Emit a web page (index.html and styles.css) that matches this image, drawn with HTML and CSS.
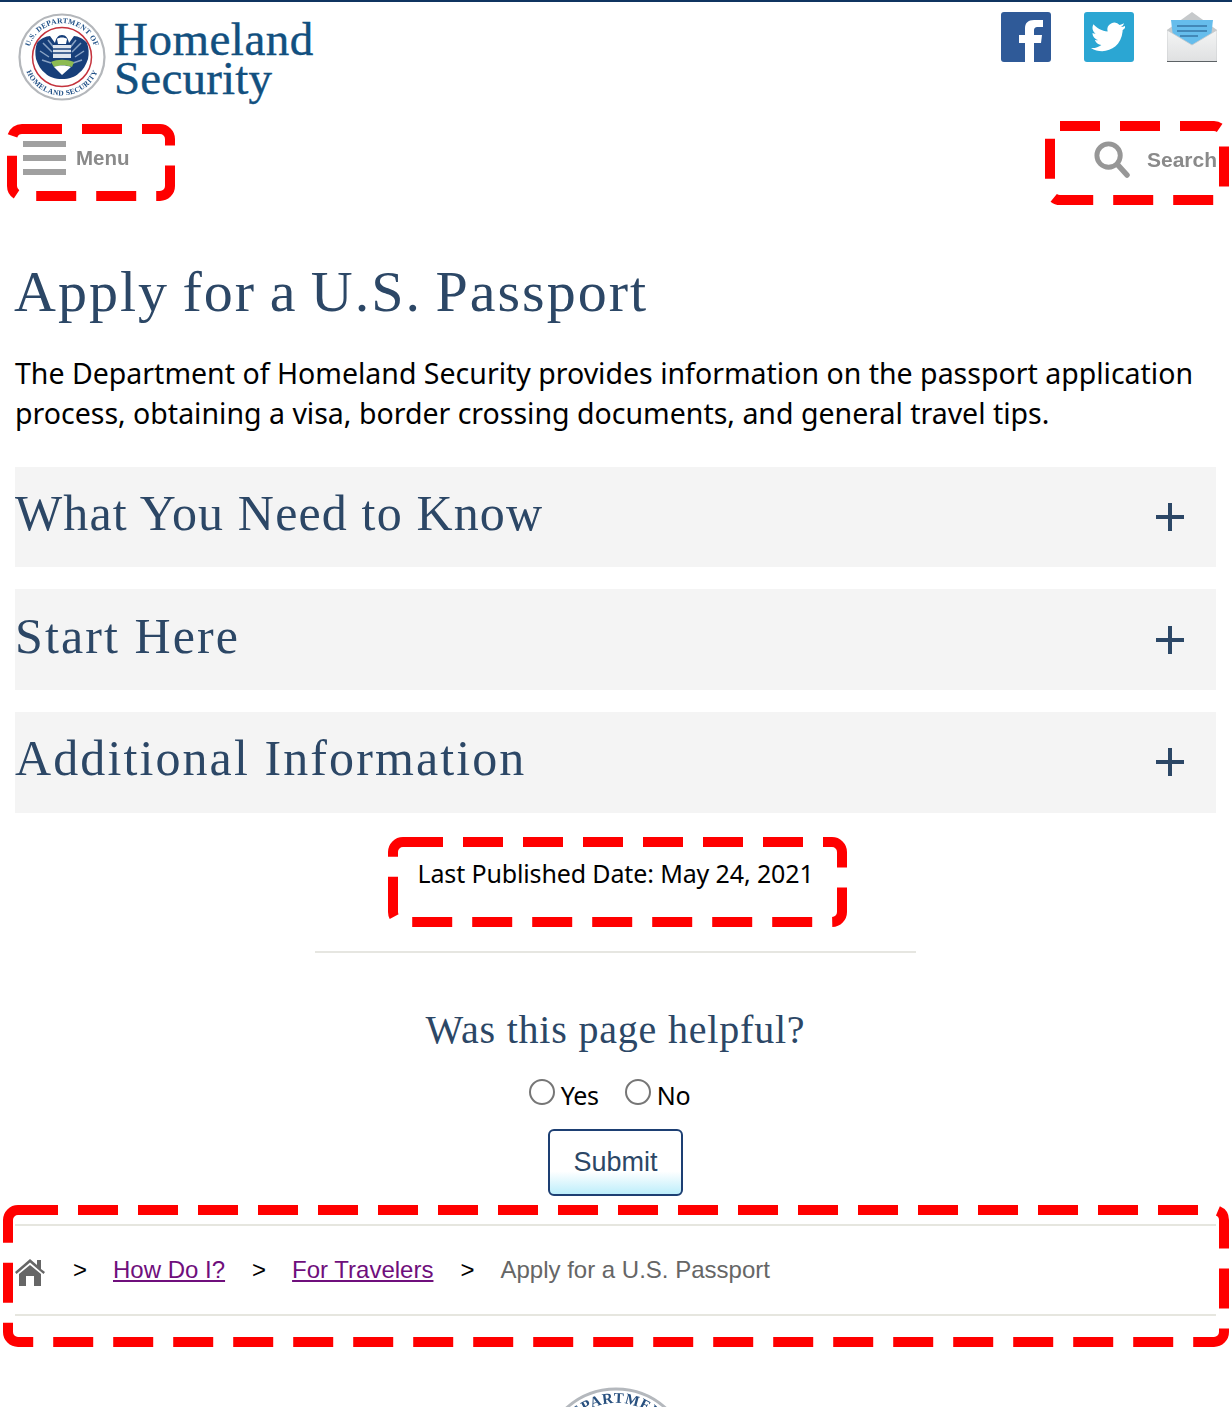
FILE: index.html
```html
<!DOCTYPE html>
<html lang="en">
<head>
<meta charset="utf-8">
<title>Apply for a U.S. Passport</title>
<link rel="stylesheet" href="styles.css">
</head>
<body>
<div class="page">
  <header class="masthead">
    <a class="brand" href="#">
      <svg class="seal" viewBox="0 0 88 88" aria-hidden="true">
        <circle cx="44" cy="44" r="42.5" fill="#fff" stroke="#b4b7bb" stroke-width="2.200"/>
        <path id="sealTop" d="M10.500 50a34 34 0 1 1 67 0" fill="none"/>
        <path id="sealBottom" d="M5.500 44a38.500 38.500 0 0 0 77 0" fill="none"/>
        <text class="seal-text"><textPath href="#sealTop" startOffset="50%" text-anchor="middle">U.S. DEPARTMENT OF</textPath></text>
        <text class="seal-text"><textPath href="#sealBottom" startOffset="50%" text-anchor="middle">HOMELAND SECURITY</textPath></text>
        <circle cx="44" cy="44" r="29.500" fill="#fff" stroke="#c4323c" stroke-width="1.500"/>
        <path d="M19 30c3-4 9-7 13-7l5 7c1-5 3-8 7-8s6 3 7 8l5-7c4 0 10 3 13 7 2 5 2 11 1 16-2 6-5 11-9 14-4 4-10 6-17 6s-13-2-17-6c-4-3-7-8-9-14-1-5-1-11 1-16z" fill="#173f7a"/>
        <path d="M25 30l9 9M30 27l7 9M63 30l-9 9M58 27l-7 9M22 38l9 6M66 38l-9 6M24 47l9 3M64 47l-9 3" stroke="#8aa3c4" stroke-width="1.500"/>
        <path d="M39 26c2-2 8-2 10 0l-1 5h-8z" fill="#fff"/>
        <path d="M35 32h18v13H35z" fill="#dfe5ee"/>
        <path d="M35 36h18M35 40h18" stroke="#173f7a" stroke-width="1.300"/>
        <path d="M33 49c6-3 16-3 23 0l-2 5c-5-2-12-2-18 0z" fill="#8dbb52"/>
        <path d="M36 54c5-2 12-2 17 0l-9 8z" fill="#fff"/>
      </svg>
      <span class="wordmark"><span class="word-top">Homeland</span><span class="word-bottom">Security</span></span>
    </a>
    <nav class="social" aria-label="Social">
      <svg class="social-icon" viewBox="0 0 50 50" aria-label="Facebook">
        <rect width="50" height="50" rx="3" fill="#2f5a98"/>
        <path d="M24 50V31h-6v-8h6v-7c0-5 3-8 9-8h9v7h-5c-3 0-4 1-4 4v4h8l-1 8h-7v19z" fill="#fff"/>
      </svg>
      <svg class="social-icon" viewBox="0 0 50 50" aria-label="Twitter">
        <rect width="50" height="50" rx="3" fill="#2ba6d3"/>
        <path d="M41 14c-1.300.6-2.600 1-4 1.100 1.400-.9 2.500-2.200 3-3.800-1.400.8-2.800 1.400-4.400 1.700a7 7 0 0 0-12 6.400C18 19.100 13 16.500 9.500 12.300c-1.900 3.200-1 7.300 2.100 9.400-1.100 0-2.200-.3-3.100-.8 0 3.400 2.400 6.300 5.600 7-1 .3-2.100.3-3.200.1.900 2.800 3.500 4.800 6.500 4.900-3 2.300-6.700 3.400-10.400 3 11.500 7.400 29.800 2.200 31.600-16.300 0-.5 0-.9 0-1.400 1-.7 1.800-1.500 2.400-2.200z" fill="#fff"/>
      </svg>
      <svg class="social-icon" viewBox="0 0 50 50" aria-label="Email">
        <defs>
          <linearGradient id="envelope" x1="0" y1="0" x2="0" y2="1">
            <stop offset="0" stop-color="#f4f5f5"/>
            <stop offset="1" stop-color="#dfe0e1"/>
          </linearGradient>
        </defs>
        <path d="M0 18L25 0l25 18v30a2 2 0 0 1-2 2H2a2 2 0 0 1-2-2z" fill="#c6c9cb"/>
        <path d="M4 8h42l-2 17-19 9-19-9z" fill="#66bdec"/>
        <path d="M10 14h30M10 19h30M13 24h18" stroke="#4288b8" stroke-width="2.200"/>
        <path d="M0 18l25 15 25-15v30a2 2 0 0 1-2 2H2a2 2 0 0 1-2-2z" fill="url(#envelope)" stroke="#c6c9cb" stroke-width=".8"/>
        <path d="M0 49.500h50" stroke="#5d6265" stroke-width="1.200"/>
      </svg>
    </nav>
  </header>

  <div class="toolbar">
    <a class="tool tool-menu" href="#">
      <span class="burger"><i></i><i></i><i></i></span>
      <span>Menu</span>
    </a>
    <a class="tool tool-search" href="#">
      <svg class="lens" viewBox="0 0 38 38" aria-hidden="true">
        <circle cx="16" cy="15" r="12" fill="none" stroke="#979797" stroke-width="5"/>
        <path d="M25 24l10 11" stroke="#979797" stroke-width="5.500" stroke-linecap="round"/>
      </svg>
      <span>Search</span>
    </a>
  </div>

  <main class="content">
    <h1 class="title">Apply for a U.S. Passport</h1>
    <p class="intro">The Department of Homeland Security provides information on the passport application process, obtaining a visa, border crossing documents, and general travel tips.</p>

    <section class="accordion">
      <div class="panel"><h2>What You Need to Know</h2><span class="plus"></span></div>
      <div class="panel"><h2 class="wide">Start Here</h2><span class="plus"></span></div>
      <div class="panel"><h2 class="wide">Additional Information</h2><span class="plus"></span></div>
    </section>

    <p class="published">Last Published Date: May 24, 2021</p>
    <hr class="divider">

    <form class="feedback">
      <h3>Was this page helpful?</h3>
      <div class="choices">
        <label><input type="radio" name="helpful"><span>Yes</span></label>
        <label><input type="radio" name="helpful"><span>No</span></label>
      </div>
      <button type="button" class="submit">Submit</button>
    </form>

    <nav class="crumbs" aria-label="Breadcrumb">
      <svg class="home" viewBox="0 0 30 28" aria-hidden="true">
        <path d="M0 14L15 1l7 6V2h4v9l4 3-1.500 2L15 4.500 1.500 16z" fill="#666"/>
        <path d="M4 16L15 7l11 9v12h-7V18h-8v10H4z" fill="#666"/>
      </svg>
      <span class="sep">&gt;</span>
      <a href="#">How Do I?</a>
      <span class="sep">&gt;</span>
      <a href="#">For Travelers</a>
      <span class="sep">&gt;</span>
      <span class="current">Apply for a U.S. Passport</span>
    </nav>
  </main>

  <footer class="foot">
    <svg class="foot-seal" viewBox="0 0 150 20" aria-hidden="true">
      <circle cx="75" cy="76" r="74" fill="#fff" stroke="#b4b8bd" stroke-width="3"/>
      <path id="arc" d="M15 76a60 60 0 0 1 120 0" fill="none"/>
      <text class="foot-seal-text"><textPath href="#arc" startOffset="50%" text-anchor="middle">DEPARTMENT</textPath></text>
    </svg>
  </footer>

  <svg class="marks" viewBox="0 0 1232 1408" aria-hidden="true">
    <rect x="12" y="129" width="158" height="67" rx="10"/>
    <rect x="1050" y="126" width="174" height="74" rx="10"/>
    <rect x="393" y="842" width="449" height="80" rx="10"/>
    <rect x="8" y="1210" width="1216" height="132" rx="10"/>
  </svg>
</div>
</body>
</html>
```
FILE: styles.css
```css
* { box-sizing: border-box; }
html, body { margin: 0; padding: 0; background: #fff; }
.page {
  position: relative;
  width: 1232px;
  height: 1408px;
  overflow: hidden;
  border-top: 2px solid #0f3460;
  font-family: "Noto Sans", sans-serif;
  color: #000;
}
.masthead {
  display: flex;
  justify-content: space-between;
  height: 106px;
  padding: 10px 15px 0 18px;
}
.brand {
  display: flex;
  gap: 9px;
  color: #12507f;
  text-decoration: none;
}
.seal { width: 88px; height: 88px; margin-top: 1px; filter: blur(0.35px); }
.seal-text { font: bold 7.500px "Liberation Serif", serif; fill: #1f4f86; letter-spacing: .3px; }
.wordmark {
  display: flex;
  flex-direction: column;
  padding-top: 8px;
  margin-left: -1px;
  font-family: "Liberation Serif", serif;
  font-size: 47px;
  line-height: 38.500px;
  -webkit-text-stroke: 0.4px #12507f;
}
.word-top { letter-spacing: 0.5px; }
.word-bottom { letter-spacing: 0.2px; }
.social { display: flex; gap: 33px; }
.social-icon { width: 50px; height: 50px; filter: blur(0.35px); }

.toolbar {
  display: flex;
  justify-content: space-between;
  height: 152px;
  padding: 0 15px 0 23px;
}
.tool {
  display: flex;
  align-items: center;
  align-self: flex-start;
  color: #8a8a8a;
  text-decoration: none;
  filter: blur(0.5px);
  font-family: "Liberation Sans", sans-serif;
  font-weight: bold;
}
.tool-menu { gap: 10px; margin-top: 33px; font-size: 20.500px; }
.tool-search { gap: 17px; margin-top: 33px; font-size: 21px; }
.burger { display: flex; flex-direction: column; gap: 8px; width: 43px; }
.burger i { height: 6px; background: #a0a0a0; }
.lens { width: 37px; height: 37px; }

.content { padding: 0 16px 0 15px; }
.title {
  margin: 0 0 0 -1px;
  font: normal 58px/64px "Liberation Serif", serif;
  letter-spacing: 2px;
  word-spacing: -3px;
  color: #2c4766;
}
.intro {
  margin: 29px 0 0;
  font-size: 28.500px;
  line-height: 40px;
}
.accordion { display: flex; flex-direction: column; gap: 22px; margin-top: 33.800px; }
.panel {
  display: flex;
  align-items: center;
  justify-content: space-between;
  height: 100.600px;
  padding-right: 32px;
  background: #f4f4f4;
}
.panel h2 {
  margin: 0;
  font: normal 50px/60px "Liberation Serif", serif;
  letter-spacing: 1.15px;
  color: #2c4766;
  position: relative;
  top: -4px;
}
.panel h2.wide { letter-spacing: 2.1px; }
.plus { position: relative; width: 28px; height: 28px; filter: blur(0.4px); }
.plus::before, .plus::after { content: ""; position: absolute; background: #2c4766; }
.plus::before { left: 0; right: 0; top: 12px; height: 4px; }
.plus::after { top: 0; bottom: 0; left: 12px; width: 4px; }

.published {
  margin: 40px 0 0;
  text-align: center;
  font-size: 25px;
  line-height: 40px;
  letter-spacing: -0.13px;
  color: #000;
}
.divider {
  width: 601px;
  height: 2px;
  margin: 58px auto 0 300px;
  border: 0;
  background: #e6e6e1;
}
.feedback { display: flex; flex-direction: column; align-items: center; }
.feedback h3 {
  margin: 52px 0 0;
  font: normal 40px/50px "Liberation Serif", serif;
  letter-spacing: 0.8px;
  color: #2c4766;
}
.choices {
  display: flex;
  gap: 26px;
  margin: 24px 12px 0 0;
  font-size: 25px;
  line-height: 34px;
  letter-spacing: -0.3px;
}
.choices label { display: flex; align-items: flex-start; gap: 6px; }
.choices span { margin-top: -1px; }
.choices input {
  appearance: none;
  width: 26px;
  height: 26px;
  margin: 0;
  border: 2px solid #767676;
  border-radius: 50%;
  background: #fff;
}
.submit {
  width: 135px;
  height: 67px;
  margin-top: 17px;
  border: 2px solid #1d3f73;
  border-radius: 6px;
  background: linear-gradient(#fff 0, #fff 64%, #bdeefb 100%);
  color: #2c4766;
  font: 27px "Liberation Sans", sans-serif;
}
.crumbs {
  display: flex;
  align-items: center;
  height: 92px;
  margin-top: 28px;
  border-top: 2px solid #e6e6df;
  border-bottom: 2px solid #e6e6df;
  font: 24px "Liberation Sans", sans-serif;
}
.home { width: 30px; height: 28px; margin: 4px 28px 0 0; }
.sep { color: #000; margin-right: 26px; }
.crumbs a { color: #6f0f7c; margin-right: 27px; }
.current { color: #666; }

.foot { display: flex; justify-content: center; margin-top: 71px; }
.foot-seal { width: 150px; height: 20px; filter: blur(0.5px); }
.foot-seal-text { font: bold 15px "Liberation Serif", serif; fill: #28507f; letter-spacing: .6px; }

.marks {
  position: absolute;
  left: 0;
  top: -2px;
  width: 1232px;
  height: 1408px;
  pointer-events: none;
}
.marks rect {
  fill: none;
  stroke: #f00;
  stroke-width: 10;
  stroke-dasharray: 40 20;
}
```
